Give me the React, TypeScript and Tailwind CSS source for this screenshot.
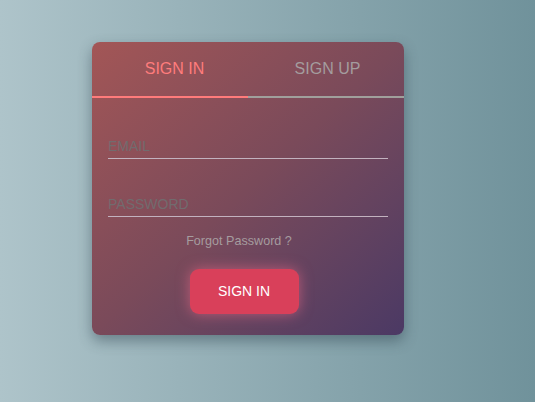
import React from "react";

export default function App() {
  return (
    <div
      className="w-full h-[402px] overflow-hidden bg-gradient-to-r from-[#aec4ca] to-[#70929b] pl-[92px] pt-[42px]"
      style={{ fontFamily: '"Liberation Sans", Arial, sans-serif' }}
    >
      <div className="w-[312px] h-[293px] rounded-lg bg-gradient-to-br from-[#a35656] via-[#7a4a5a] to-[#4b3964] shadow-[0_6px_14px_rgba(40,60,70,0.45)] flex flex-col">
        <div className="flex h-[54px] items-center">
          <div className="flex-1 text-center text-[16px] text-[#ff7c7c] pl-[6px]">SIGN IN</div>
          <div className="flex-1 text-center text-[16px] text-[#a49c9e]">SIGN UP</div>
        </div>
        <div className="flex h-[2px]">
          <div className="flex-1 bg-[#ff7b7b]" />
          <div className="flex-1 bg-[#a0a09c]" />
        </div>
        <div className="flex flex-col px-4 pt-[35px]">
          <input
            placeholder="EMAIL"
            className="h-[26px] w-full bg-transparent border-b border-[#c2b2bf] text-[14px] text-white placeholder:text-[#726b6e] outline-none"
          />
          <input
            placeholder="PASSWORD"
            type="password"
            className="mt-[32px] h-[26px] w-full bg-transparent border-b border-[#c2b2bf] text-[14px] text-white placeholder:text-[#726b6e] outline-none"
          />
          <div className="mt-[17px] flex justify-center pr-[18px]">
            <span className="text-[12.6px] leading-[15px] text-[#a59c9f]">Forgot Password ?</span>
          </div>
          <div className="mt-[20px] flex justify-center pr-[8px]">
            <button className="w-[109px] h-[45px] rounded-[9px] bg-[#d9405a] text-white text-[14px] shadow-[0_0_14px_rgba(255,110,140,0.55)]">
              SIGN IN
            </button>
          </div>
        </div>
      </div>
    </div>
  );
}
